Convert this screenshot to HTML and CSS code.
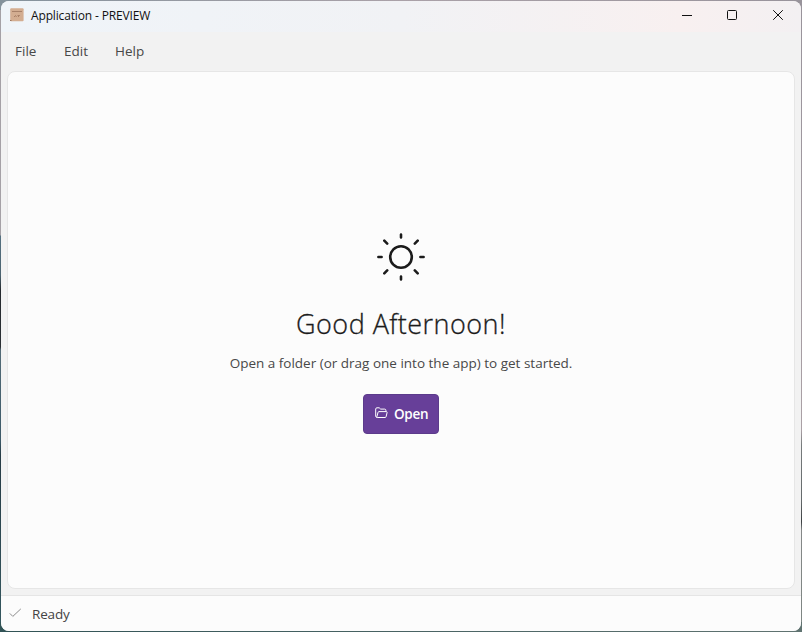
FILE: index.html
```html
<!DOCTYPE html>
<html lang="en">
<head>
<meta charset="utf-8">
<title>Application - PREVIEW</title>
<link rel="stylesheet" href="styles.css">
</head>
<body>
<div class="window">
  <header class="titlebar">
    <svg class="app-icon" width="14" height="14" viewBox="0 0 14 14">
      <rect x=".2" y=".2" width="13.4" height="13" rx="1" fill="#d3ad91"/>
      <path d="M2 3.5h10" stroke="#a88169" stroke-width="1"/>
      <path d="M4 9l1.5-1.5L6.5 9M7.5 7.5h2.3M8 9l1-1" stroke="#a47a62" stroke-width=".9" fill="none"/>
      <path d="M0 12.5h1.5" stroke="#9d765e"/>
    </svg>
    <span class="title">Application - PREVIEW</span>
    <div class="controls">
      <svg width="12" height="12" viewBox="0 0 12 12"><path d="M2 6.5h10" /></svg>
      <svg width="12" height="12" viewBox="0 0 12 12"><rect x="1.5" y="1.5" width="9" height="9" rx="1"/></svg>
      <svg width="12" height="12" viewBox="0 0 12 12"><path d="M1.2 1.2l9.6 9.6M10.8 1.2L1.2 10.8"/></svg>
    </div>
  </header>
  <nav class="menubar"><span class="file">File</span><span class="edit">Edit</span><span>Help</span></nav>
  <main class="panel">
    <svg class="sun" width="48" height="48" viewBox="0 0 48 48">
      <circle cx="24" cy="24" r="10.8"/>
      <path d="M24 1.6v2.8M24 43.6v2.8M1.4 24h3.2M43.4 24h3.2M7.3 7.7l2.9 2.9M37.8 37.4l2.9 2.9M40.7 7.7l-2.9 2.9M10.2 37.4l-2.9 2.9"/>
    </svg>
    <h1>Good Afternoon!</h1>
    <p>Open a folder (or drag one into the app) to get started.</p>
    <button class="open" type="button">
      <svg width="13" height="12" viewBox="0 0 13 12"><path d="M2.2 10.5h7.8c.6 0 1-.3 1.1-.8l1-4.2c.1-.5-.2-.9-.7-.9H4c-.5 0-.9.3-1 .8l-1.1 4.3c-.2.5 0 .8.3.8zM1.9 10.4c-.8 0-1.2-.5-1.2-1.2V2c0-.7.5-1.2 1.2-1.2h2.3l1.5 1.3h4c.8 0 1.2.5 1.2 1.2v1.2"/></svg>
      <span>Open</span>
    </button>
  </main>
  <footer class="status">
    <svg width="13" height="10" viewBox="0 0 13 10"><path d="M.8 5.4l3 3L11.8.9"/></svg>
    <span>Ready</span>
  </footer>
</div>
</body>
</html>
```
FILE: styles.css
```css
* { box-sizing: border-box; }
body {
  margin: 0;
  width: 802px;
  height: 632px;
  padding: 1px;
  overflow: hidden;
  font-family: "Open Sans", "Noto Sans", sans-serif;
  background:
    linear-gradient(90deg, #84929c, #aaa1a8 50%, #98939b) top / 100% 10px no-repeat,
    linear-gradient(90deg, #315356, #607371) bottom / 100% 10px no-repeat,
    linear-gradient(#a5a1a6 0 235px, #547080 236px, #4b6370 275px, #24292e 290px, #2b3034 347px, #536b77 350px, #3c5968 440px, #263b45 455px, #365961) left / 50% 100% no-repeat,
    linear-gradient(#98939b, #aaa0a5 430px, #777b7c 445px, #64696b 500px, #3c4042 522px, #858888 530px, #7d8582);
}
.window {
  width: 800px;
  height: 630px;
  display: flex;
  flex-direction: column;
  border-radius: 8px;
  overflow: hidden;
  background: #f2f2f2;
}
.titlebar {
  height: 31px;
  display: flex;
  align-items: center;
  padding: 0 17px 3px 9px;
  background: linear-gradient(90deg, #eff4f9, #f1f2f5 50%, #f8f0f0 85%, #f3f0f2);
}
.title {
  margin: 2px 0 0 7px;
  font-size: 12px;
  line-height: 16px;
  letter-spacing: -0.15px;
  color: #111;
}
.controls { display: flex; gap: 34px; margin-left: auto; }
.controls svg, .sun, .open svg, .status svg { display: block; fill: none; }
.controls svg { stroke: #111; stroke-width: 1; }
.menubar {
  height: 39px;
  padding: 9px 14px;
  display: flex;
  font-size: 13.5px;
  line-height: 20px;
  color: #484848;
}
.file { width: 49px; }
.edit { width: 51px; }
.panel {
  margin: 0 6px;
  height: 518px;
  border: 1px solid #e6e6e6;
  border-radius: 8px;
  background: #fcfcfc;
  display: flex;
  flex-direction: column;
  align-items: center;
  padding-top: 161px;
}
.sun { stroke: #1b1b1b; stroke-width: 2.6; stroke-linecap: round; }
h1 {
  margin: 25px 0 0;
  font-size: 27px;
  line-height: 36px;
  font-weight: 300;
  letter-spacing: 0.45px;
  -webkit-text-stroke: 0.3px #1b1b1b;
  color: #1b1b1b;
  white-space: nowrap;
}
p {
  margin: 11px 0 0;
  font-size: 13.5px;
  line-height: 20px;
  color: #484848;
  white-space: nowrap;
}
.open {
  margin-top: 21px;
  width: 76px;
  height: 40px;
  border: 1px solid #5c3b8b;
  border-radius: 4px;
  background: #673f99;
  color: #fff;
  padding: 0 0 0 11px;
  display: flex;
  align-items: center;
  gap: 6px;
  font: 600 13.5px/20px "Open Sans", "Noto Sans", sans-serif;
}
.open span { letter-spacing: -0.3px; }
.open svg { stroke: #fff; stroke-width: 1; margin-top: -2px; }
.status {
  margin-top: 6px;
  height: 36px;
  border-top: 1px solid #e5e5e5;
  background: #fcfcfc;
  display: flex;
  align-items: center;
  padding-left: 8px;
  gap: 10px;
  font-size: 13.5px;
  letter-spacing: -0.15px;
  line-height: 20px;
  color: #444;
}
.status svg { stroke: #8c8c8c; stroke-width: 1; margin-top: -2px; }
```
